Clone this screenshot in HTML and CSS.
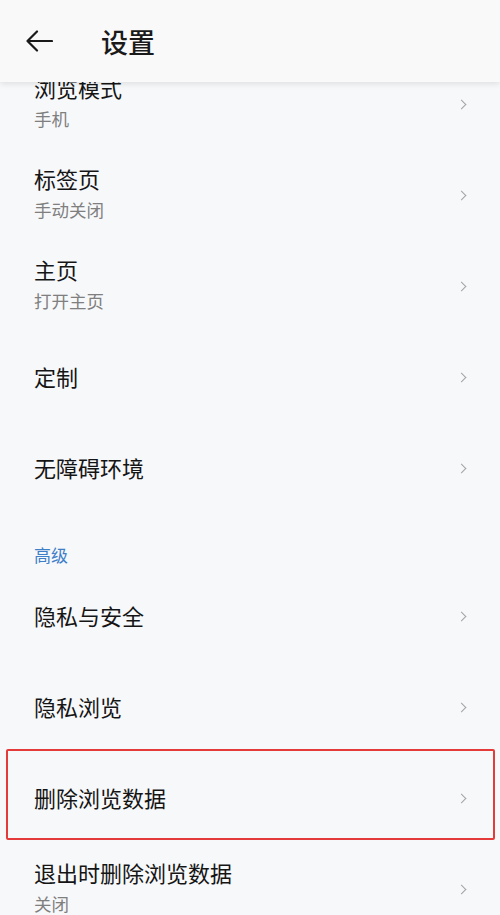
FILE: index.html
```html
<!DOCTYPE html>
<html lang="zh-CN">
<head>
<meta charset="utf-8">
<title>设置</title>
<link rel="stylesheet" href="styles.css">
</head>
<body>
<header class="topbar">
  <svg class="back" width="28" height="22" viewBox="0 0 28 22" aria-hidden="true">
    <path d="M27 11H2.5M12 1.5L2.5 11L12 20.5" fill="none" stroke="#1a1a1a" stroke-width="2.2" stroke-linecap="round" stroke-linejoin="round"/>
  </svg>
  <h1 class="title">设置</h1>
</header>
<main class="list">
  <div class="row two">
    <div class="texts"><div class="t">浏览模式</div><div class="s">手机</div></div>
    <span class="chev"></span>
  </div>
  <div class="row two">
    <div class="texts"><div class="t">标签页</div><div class="s">手动关闭</div></div>
    <span class="chev"></span>
  </div>
  <div class="row two">
    <div class="texts"><div class="t">主页</div><div class="s">打开主页</div></div>
    <span class="chev"></span>
  </div>
  <div class="row">
    <div class="texts"><div class="t">定制</div></div>
    <span class="chev"></span>
  </div>
  <div class="row">
    <div class="texts"><div class="t">无障碍环境</div></div>
    <span class="chev"></span>
  </div>
  <div class="section">高级</div>
  <div class="row">
    <div class="texts"><div class="t">隐私与安全</div></div>
    <span class="chev"></span>
  </div>
  <div class="row">
    <div class="texts"><div class="t">隐私浏览</div></div>
    <span class="chev"></span>
  </div>
  <div class="row marked">
    <div class="texts"><div class="t">删除浏览数据</div></div>
    <span class="chev"></span>
    <span class="mark"></span>
  </div>
  <div class="row two">
    <div class="texts"><div class="t">退出时删除浏览数据</div><div class="s">关闭</div></div>
    <span class="chev"></span>
  </div>
</main>
</body>
</html>
```

FILE: styles.css
```css
* { box-sizing: border-box; }
html, body { margin: 0; padding: 0; }
body {
  width: 500px;
  height: 915px;
  overflow: hidden;
  background: #f7f8fa;
  font-family: "Noto Sans CJK SC", "Noto Sans", sans-serif;
  color: #1c1c1c;
}
.topbar {
  position: relative;
  z-index: 2;
  height: 82px;
  background: #f9f9fa;
  box-shadow: 0 2px 6px rgba(0,0,0,0.10);
  display: flex;
  align-items: center;
  padding-left: 25px;
}
.back { display: block; }
.title {
  margin: 0 0 0 48px;
  font-size: 27px;
  font-weight: 500;
  line-height: 1;
  color: #1a1a1a;
}
.list {
  margin-top: -23px;
  position: relative;
  z-index: 1;
}
.row {
  position: relative;
  height: 91px;
  display: flex;
  align-items: center;
  padding: 0 34px 4px 34px;
}
.row.two { padding-bottom: 6px; }
.texts { flex: 1; }
.t {
  font-size: 22px;
  line-height: 28px;
  font-weight: 400;
  color: #151515;
}
.s {
  font-size: 17.5px;
  line-height: 24px;
  color: #7f7f7f;
  margin-top: 6px;
}
.chev {
  width: 7px;
  height: 7px;
  border-right: 1.6px solid #a3a3a3;
  border-top: 1.6px solid #a3a3a3;
  transform: rotate(45deg);
  margin-right: 1px;
}
.row .chev { margin-top: 4px; }
.row.two .chev { margin-top: 6px; }
.section {
  height: 57px;
  padding: 30px 0 0 34px;
  font-size: 17px;
  line-height: 22px;
  color: #3f7fc8;
}
.mark {
  position: absolute;
  left: 6px;
  right: 5px;
  top: -4px;
  bottom: 4px;
  border: 2px solid #e53a3a;
  border-radius: 2px;
  pointer-events: none;
}
```
